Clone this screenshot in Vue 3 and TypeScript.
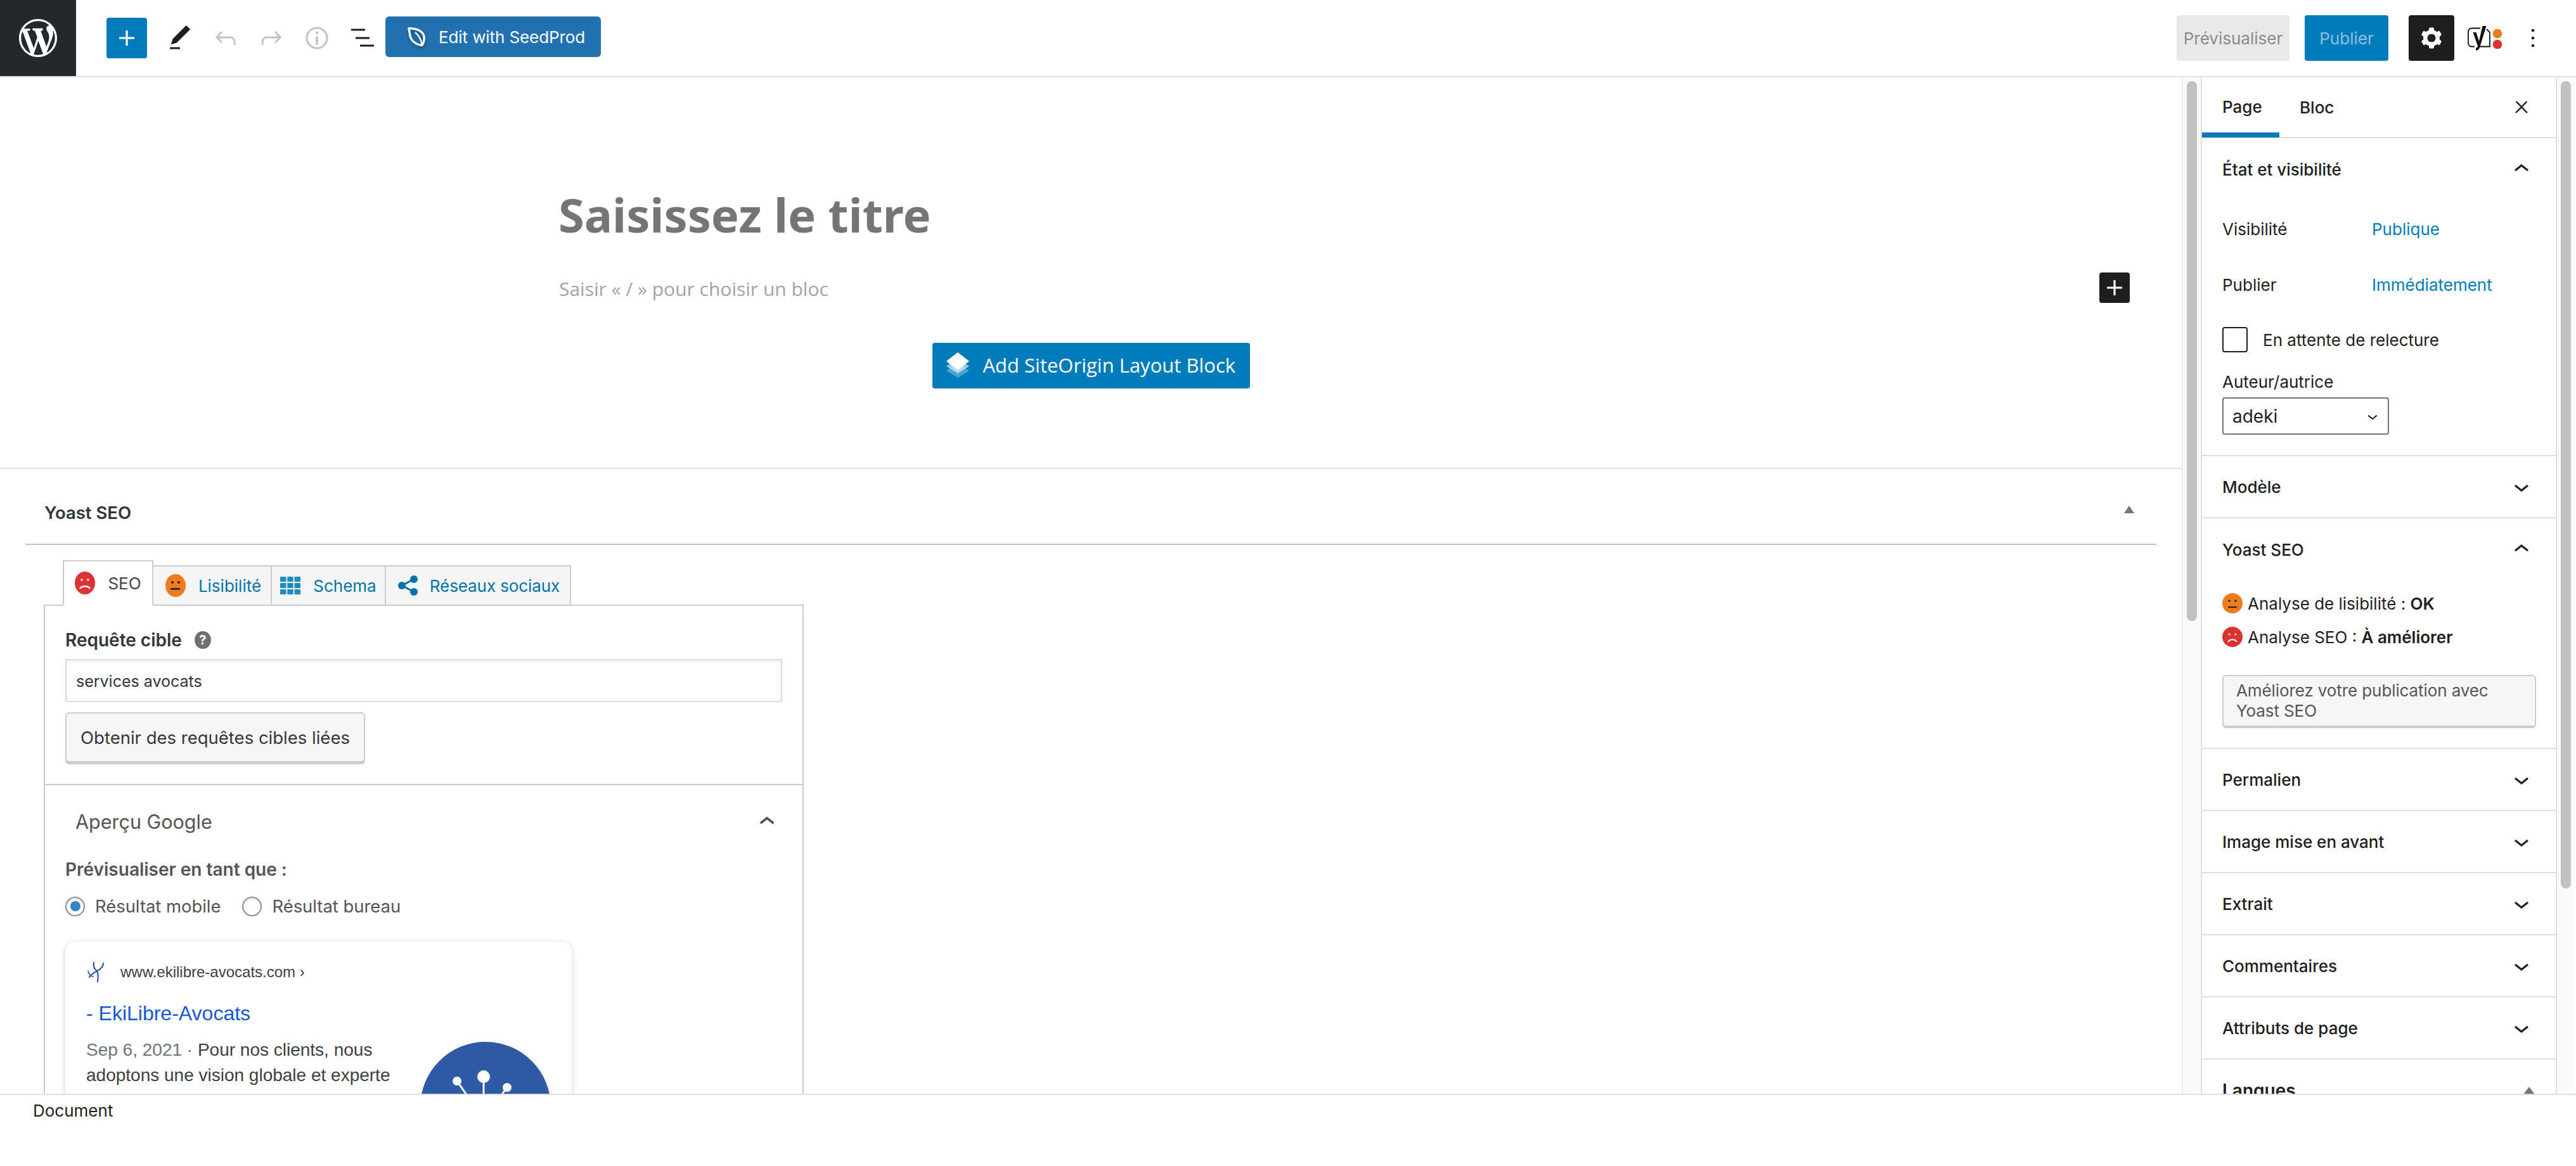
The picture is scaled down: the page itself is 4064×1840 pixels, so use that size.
<script setup lang="ts">
import { ref } from 'vue'

const chevronDown = 'M17.5 11.6L12 16l-5.5-4.4.9-1.2L12 14l4.5-3.6 1 1.2z'
const chevronUp = 'M6.5 12.4L12 8l5.5 4.4-.9 1.2L12 10l-4.5 3.6-1-1.2z'
const plus = 'M18 11.2h-5.2V6h-1.6v5.2H6v1.6h5.2V18h1.6v-5.2H18z'

const closedPanels = ref<string[]>(['Permalien', 'Image mise en avant', 'Extrait', 'Commentaires', 'Attributs de page'])
const gearTeeth = [0, 60, 120, 180, 240, 300]
</script>

<template>
  <div class="page">
    <!-- barre du haut -->
    <header class="topbar">
      <div class="wp-logo">
        <svg viewBox="0 0 20 20" width="60" height="60" fill="#fff">
          <path d="M20 10c0-5.51-4.49-10-10-10C4.48 0 0 4.49 0 10c0 5.52 4.48 10 10 10 5.51 0 10-4.48 10-10zM7.78 15.37L4.37 6.22c.55-.02 1.17-.08 1.17-.08.5-.06.44-1.13-.06-1.11 0 0-1.45.11-2.37.11-.18 0-.37 0-.58-.01C4.12 2.69 6.87 1.11 10 1.11c2.33 0 4.45.87 6.05 2.34-.68-.11-1.65.39-1.65 1.58 0 .74.45 1.36.9 2.1.35.61.55 1.36.55 2.46 0 1.49-1.4 5-1.4 5l-3.03-8.37c.54-.02.82-.17.82-.17.5-.05.44-1.25-.06-1.22 0 0-1.44.12-2.38.12-.87 0-2.33-.12-2.33-.12-.5-.03-.56 1.2-.06 1.22l.92.08 1.26 3.41zM17.41 10c.24-.64.74-1.87.43-4.25.7 1.29 1.05 2.71 1.05 4.25 0 3.29-1.73 6.24-4.4 7.78.97-2.59 1.94-5.2 2.92-7.78zM6.1 18.09C3.12 16.65 1.11 13.53 1.11 10c0-1.3.23-2.48.72-3.59C3.25 10.3 4.67 14.2 6.1 18.09zm4.03-6.63l2.58 6.98c-.86.29-1.76.45-2.71.45-.79 0-1.57-.11-2.29-.33.81-2.38 1.62-4.74 2.42-7.1z" />
        </svg>
      </div>
      <button class="add-btn">
        <svg viewBox="0 0 24 24" width="48" height="48" fill="#fff"><path :d="plus" /></svg>
      </button>
      <div class="tool-icons">
        <span class="tool">
          <svg viewBox="0 0 24 24" width="48" height="48" fill="#1e1e1e"><path d="M20.1 5.1L16.9 2 6.2 12.7l-1.3 4.4 4.5-1.3L20.1 5.1zM4 20.8h8v-1.5H4v1.5z" /></svg>
        </span>
        <span class="tool">
          <svg viewBox="0 0 24 24" width="48" height="48" fill="#c4c4c4"><path d="M18.3 11.7c-.6-.6-1.4-.9-2.3-.9H6.7l2.9-3.3-1.1-1-4.5 5L8.5 16l1-1-2.7-2.7H16c.5 0 .9.2 1.3.5 1 1 1 3.4 1 4.5v.3h1.5v-.2c0-1.5 0-4.3-1.5-5.7z" /></svg>
        </span>
        <span class="tool">
          <svg viewBox="0 0 24 24" width="48" height="48" fill="#c4c4c4"><path d="M15.6 6.5l-1.1 1 2.9 3.3H8c-.9 0-1.7.3-2.3.9-1.4 1.5-1.4 4.2-1.4 5.6v.2h1.5v-.3c0-1.1 0-3.5 1-4.5.3-.3.7-.5 1.3-.5h9.2L14.5 15l1.1 1.1 4.6-4.6-4.6-5z" /></svg>
        </span>
        <span class="tool">
          <svg viewBox="0 0 24 24" width="48" height="48" fill="#c4c4c4"><path d="M12 3.2c-4.8 0-8.8 3.9-8.8 8.8 0 4.8 3.9 8.8 8.8 8.8 4.8 0 8.8-3.9 8.8-8.8 0-4.8-4-8.8-8.8-8.8zm0 16c-4 0-7.2-3.3-7.2-7.2C4.8 8 8 4.8 12 4.8s7.2 3.3 7.2 7.2c0 4-3.2 7.2-7.2 7.2zM11 17h2v-6h-2v6zm0-8h2V7h-2v2z" /></svg>
        </span>
        <span class="tool">
          <svg viewBox="0 0 48 48" width="48" height="48" fill="#1e1e1e">
            <rect x="6" y="9.5" width="22" height="3" />
            <rect x="13" y="22.5" width="22" height="3" />
            <rect x="20" y="34.5" width="22" height="3" />
          </svg>
        </span>
      </div>
      <button class="seedprod">
        <svg class="seed-leaf" viewBox="0 0 30 32" width="30" height="32" fill="none" stroke="#fff" stroke-width="3.4" stroke-linejoin="round">
          <path d="M3 2.5c10 .5 22 3 24 13 .7 5-.6 10-3 14-9-1-17-6-19-15C4.200 10 3.500 6 3 2.500z" />
          <path d="M13 9c5 4 9 10 11 20" stroke-width="2.4" />
        </svg>
        <span>Edit with SeedProd</span>
      </button>
      <div class="spacer"></div>
      <button class="preview">Prévisualiser</button>
      <button class="publish">Publier</button>
      <button class="gear">
        <svg viewBox="0 0 24 24" width="48" height="48" fill="#fff">
          <rect v-for="a in gearTeeth" :key="a" x="10" y="3.700" width="4" height="5" rx="1" :transform="`rotate(${a} 12 12)`" />
          <path fill-rule="evenodd" d="M12 5.500a6.500 6.500 0 1 0 0 13 6.500 6.500 0 0 0 0-13zm0 3.200a3.300 3.300 0 1 1 0 6.600 3.300 3.300 0 0 1 0-6.600z" />
        </svg>
      </button>
      <svg class="yoast-logo" viewBox="0 0 56 40" width="56" height="40">
        <path d="M21 4.500H7.500A5.500 5.500 0 0 0 2 10v18a5.500 5.500 0 0 0 5.500 5.500H12M31 6l5 5v22.500H20" fill="none" stroke="#111" stroke-width="1.800" />
        <path d="M9.500 11h5l4.500 14L24.500 1h6L20 35c-1 3-3 4.500-6 4.500v-4c1.500 0 2.500-.8 3-2.500l-.4-1.500z" fill="#111" />
        <circle cx="48" cy="13" r="7.300" fill="#ee7c1b" />
        <circle cx="48" cy="30" r="7.300" fill="#dc3232" />
      </svg>
      <span class="more">
        <svg viewBox="0 0 24 24" width="48" height="48" fill="#1e1e1e"><path d="M13 19h-2v-2h2v2zm0-6h-2v-2h2v2zm0-6h-2V5h2v2z" /></svg>
      </span>
    </header>

    <div class="workspace">
      <!-- éditeur -->
      <main class="editor">
        <section class="canvas">
          <h1 class="post-title">Saisissez le titre</h1>
          <div class="para-row">
            <span class="placeholder">Saisir « / » pour choisir un bloc</span>
            <button class="inline-add">
              <svg viewBox="0 0 24 24" width="48" height="48" fill="#fff"><path :d="plus" /></svg>
            </button>
          </div>
          <div class="so-row">
            <button class="so-btn">
              <svg viewBox="0 0 40 40" width="40" height="40">
                <path d="M20 16l18 13-18 11L2 29z" fill="#fff" opacity=".3" />
                <path d="M20 9l18 13-18 11L2 22z" fill="#fff" opacity=".6" />
                <path d="M20 0l18 14-18 14L2 14z" fill="#fff" />
              </svg>
              <span>Add SiteOrigin Layout Block</span>
            </button>
          </div>
        </section>

        <section class="metabox">
          <div class="mb-head">
            <span class="mb-title">Yoast SEO</span>
            <span class="mb-toggle"></span>
          </div>
          <div class="mb-body">
            <div class="y-tabs">
              <div class="y-tab">
                <svg class="face" viewBox="0 0 32 36" width="32" height="36">
                  <ellipse cx="16" cy="18" rx="16" ry="18" fill="#dc3232" />
                  <circle cx="11" cy="13" r="2" fill="#fff" opacity=".75" /><circle cx="21" cy="13" r="2" fill="#fff" opacity=".75" />
                  <path d="M8 27c3-5 13-5 16 0" fill="none" stroke="#fff" stroke-width="2.400" />
                </svg>
                <span>SEO</span>
              </div>
              <div class="y-tab">
                <svg class="face" viewBox="0 0 32 36" width="32" height="36">
                  <ellipse cx="16" cy="18" rx="16" ry="18" fill="#ee7c1b" />
                  <circle cx="11" cy="13" r="2" fill="#222" /><circle cx="21" cy="13" r="2" fill="#222" />
                  <rect x="8" y="22" width="15" height="2.600" fill="#222" />
                </svg>
                <span>Lisibilité</span>
              </div>
              <div class="y-tab">
                <svg viewBox="0 0 32 28" width="32" height="28" fill="#1e8cbe">
                  <rect x="0" y="0" width="9.500" height="8" rx="1" /><rect x="11.200" y="0" width="9.500" height="8" rx="1" /><rect x="22.500" y="0" width="9.500" height="8" rx="1" />
                  <rect x="0" y="10" width="9.500" height="8" rx="1" /><rect x="11.200" y="10" width="9.500" height="8" rx="1" /><rect x="22.500" y="10" width="9.500" height="8" rx="1" />
                  <rect x="0" y="20" width="9.500" height="8" rx="1" /><rect x="11.200" y="20" width="9.500" height="8" rx="1" /><rect x="22.500" y="20" width="9.500" height="8" rx="1" />
                </svg>
                <span>Schema</span>
              </div>
              <div class="y-tab">
                <svg viewBox="0 0 32 32" width="32" height="32" fill="#0073aa">
                  <circle cx="25" cy="6" r="6" /><circle cx="6" cy="16" r="6" /><circle cx="25" cy="26" r="6" />
                  <path d="M25 6L6 16l19 10" fill="none" stroke="#0073aa" stroke-width="3" />
                </svg>
                <span>Réseaux sociaux</span>
              </div>
            </div>
            <div class="y-box">
              <div class="y-sec first">
                <div class="kw-label">
                  <span>Requête cible</span>
                  <span class="help">?</span>
                </div>
                <div class="kw-input">services avocats</div>
                <button class="kw-btn">Obtenir des requêtes cibles liées</button>
              </div>
              <div class="y-sec">
                <div class="gp-head">
                  <span>Aperçu Google</span>
                  <svg viewBox="0 0 24 24" width="48" height="48" fill="#555"><path :d="chevronUp" stroke="#555" stroke-width=".4" /></svg>
                </div>
                <div class="gp-label">Prévisualiser en tant que :</div>
                <div class="radios">
                  <span class="radio on"></span><span class="r-text">Résultat mobile</span>
                  <span class="radio"></span><span class="r-text">Résultat bureau</span>
                </div>
                <div class="serp">
                  <div class="serp-url">
                    <svg viewBox="0 0 30 32" width="30" height="32" fill="none" stroke="#2d5ba5" stroke-width="2.200" stroke-linecap="round">
                      <path d="M12 1c-1 6 1 10 4 12 3 4 3 12 2 18" />
                      <path d="M27 2c0 6-5 10-11 13-4 2-8 4-11 9" />
                      <path d="M3 14c1 5 2 8 8 9" stroke-width="1.600" />
                    </svg>
                    <span>www.ekilibre-avocats.com ›</span>
                  </div>
                  <div class="serp-title">- EkiLibre-Avocats</div>
                  <div class="serp-main">
                    <div class="serp-text">
                      <span class="date">Sep 6, 2021 ·</span> Pour nos clients, nous<br />
                      adoptons une vision globale et experte<br />
                      à vos côtés tout au long de
                    </div>
                    <svg class="serp-img" viewBox="0 0 206 206" width="206" height="206">
                      <circle cx="103" cy="103" r="103" fill="#2d5ba5" />
                      <path d="M100 55v70M58 62l42 60M137 72l-37 50" stroke="#fff" stroke-width="3" />
                      <circle cx="100" cy="55" r="10" fill="#fff" />
                      <circle cx="58" cy="62" r="7" fill="#fff" />
                      <circle cx="137" cy="72" r="7" fill="#fff" />
                    </svg>
                  </div>
                </div>
              </div>
            </div>
          </div>
        </section>
      </main>
      <div class="track editor-track"><div class="thumb editor-thumb"></div></div>

      <!-- colonne latérale -->
      <aside class="sidebar">
        <div class="side-tabs">
          <span class="side-tab on">Page</span>
          <span class="side-tab">Bloc</span>
          <svg class="side-close" viewBox="0 0 24 24" width="30" height="30" fill="#1e1e1e"><path d="M13 11.800l6.100-6.300-1-1-6.100 6.200-6.100-6.200-1 1 6.100 6.300-6.500 6.700 1 1 6.500-6.600 6.500 6.600 1-1z" stroke="#1e1e1e" stroke-width=".6" /></svg>
        </div>

        <div class="panel">
          <div class="panel-head tall">
            <span>État et visibilité</span>
            <svg viewBox="0 0 24 24" width="48" height="48" fill="#1e1e1e"><path :d="chevronUp" /></svg>
          </div>
          <div class="status-body">
            <div class="status-row"><span class="s-label">Visibilité</span><span class="s-link">Publique</span></div>
            <div class="status-row second"><span class="s-label">Publier</span><span class="s-link">Immédiatement</span></div>
            <div class="check-row"><span class="check"></span><span>En attente de relecture</span></div>
            <div class="author-label">Auteur/autrice</div>
            <div class="author-select">
              <span>adeki</span>
              <svg viewBox="0 0 24 24" width="32" height="32" fill="#1e1e1e"><path :d="chevronDown" /></svg>
            </div>
          </div>
        </div>

        <div class="panel">
          <div class="panel-head">
            <span>Modèle</span>
            <svg viewBox="0 0 24 24" width="48" height="48" fill="#1e1e1e"><path :d="chevronDown" /></svg>
          </div>
        </div>

        <div class="panel">
          <div class="panel-head tall">
            <span>Yoast SEO</span>
            <svg viewBox="0 0 24 24" width="48" height="48" fill="#1e1e1e"><path :d="chevronUp" /></svg>
          </div>
          <div class="yoast-body">
            <div class="score">
              <svg viewBox="0 0 32 32" width="32" height="32">
                <circle cx="16" cy="16" r="16" fill="#ee7c1b" />
                <circle cx="11" cy="12" r="1.800" fill="#222" /><circle cx="21" cy="12" r="1.800" fill="#222" />
                <rect x="9" y="21" width="14" height="2.200" fill="#222" />
              </svg>
              <span>Analyse de lisibilité : <b>OK</b></span>
            </div>
            <div class="score">
              <svg viewBox="0 0 32 32" width="32" height="32">
                <circle cx="16" cy="16" r="16" fill="#dc3232" />
                <circle cx="11" cy="12" r="1.800" fill="#fff" opacity=".75" /><circle cx="21" cy="12" r="1.800" fill="#fff" opacity=".75" />
                <path d="M9 24c3-5 11-5 14 0" fill="none" stroke="#fff" stroke-width="2.200" />
              </svg>
              <span>Analyse SEO : <b>À améliorer</b></span>
            </div>
            <button class="improve">Améliorez votre publication avec Yoast SEO</button>
          </div>
        </div>

        <div v-for="p in closedPanels" :key="p" class="panel">
          <div class="panel-head">
            <span>{{ p }}</span>
            <svg viewBox="0 0 24 24" width="48" height="48" fill="#1e1e1e"><path :d="chevronDown" /></svg>
          </div>
        </div>

        <div class="panel-head tall langues">
          <span>Langues</span>
          <span class="lang-toggle"></span>
        </div>
      </aside>
      <div class="track side-track"><div class="thumb side-thumb"></div></div>
    </div>

    <footer class="foot">Document</footer>
  </div>
</template>

<style scoped>
.page {
  width: 4064px;
  height: 1840px;
  display: flex;
  flex-direction: column;
  overflow: hidden;
  background: #fff;
  color: #1e1e1e;
  font-family: Inter, "Liberation Sans", sans-serif;
  font-size: 26px;
}
button {
  font: inherit;
  border: 0;
  padding: 0;
  cursor: pointer;
}
svg {
  display: block;
  flex: none;
}

/* topbar */
.topbar {
  height: 122px;
  flex: none;
  display: flex;
  align-items: center;
  border-bottom: 2px solid #e0e0e0;
  padding-right: 44px;
}
.wp-logo {
  width: 120px;
  height: 120px;
  background: #23282d;
  display: flex;
  align-items: center;
  justify-content: center;
}
.add-btn {
  width: 64px;
  height: 64px;
  margin-left: 48px;
  border-radius: 4px;
  background: #007cba;
  display: flex;
  align-items: center;
  justify-content: center;
}
.tool-icons {
  display: flex;
  margin-left: 16px;
}
.tool {
  width: 72px;
  height: 48px;
  padding-left: 12px;
}
.seedprod {
  width: 340px;
  height: 64px;
  margin-top: -4px;
  border-radius: 6px;
  background: #2271b1;
  color: #fff;
  display: flex;
  align-items: center;
  padding-left: 34px;
  gap: 20px;
  letter-spacing: -0.1px;
}
.seed-leaf {
  filter: drop-shadow(1px 3px 3px rgba(0, 0, 0, 0.35));
}
.spacer {
  flex: 1;
}
.preview,
.publish {
  height: 72px;
  border-radius: 4px;
  text-align: center;
}
.preview {
  width: 178px;
  background: #e9e9e9;
  color: #8b8b8b;
}
.publish {
  width: 132px;
  margin-left: 24px;
  background: #007cba;
  color: #8cc0de;
}
.gear {
  width: 72px;
  height: 72px;
  margin-left: 32px;
  border-radius: 4px;
  background: #1e1e1e;
  display: flex;
  align-items: center;
  justify-content: center;
}
.yoast-logo {
  margin-left: 20px;
}
.more {
  margin-left: 24px;
}

.workspace {
  flex: 1;
  min-height: 0;
  display: flex;
}

/* editor */
.editor {
  width: 3442px;
  flex: none;
  overflow: hidden;
}
.canvas {
  height: 618px;
  border-bottom: 2px solid #e0e0e0;
  padding-top: 171px;
  box-sizing: border-box;
  font-family: "Noto Sans", "Open Sans", sans-serif;
}
.post-title {
  width: 1680px;
  margin: 0 auto;
  font-size: 74px;
  line-height: 91px;
  font-weight: 700;
  color: #757575;
}
.para-row {
  margin-top: 46px;
  padding: 0 82px 0 882px;
  height: 48px;
  display: flex;
  align-items: center;
  justify-content: space-between;
}
.placeholder {
  font-family: "Open Sans", "Noto Sans", sans-serif;
  font-size: 30px;
  padding-top: 2px;
  color: #a3a3a3;
}
.inline-add {
  width: 48px;
  height: 48px;
  border-radius: 4px;
  background: #1e1e1e;
}
.so-row {
  margin-top: 63px;
  display: flex;
  justify-content: center;
}
.so-btn {
  width: 501px;
  height: 72px;
  border-radius: 4px;
  background: #007cba;
  color: #fff;
  font-family: "Open Sans", "Noto Sans", sans-serif;
  font-size: 31px;
  display: flex;
  align-items: center;
  padding-left: 20px;
  padding-bottom: 2px;
  gap: 20px;
  white-space: nowrap;
}

/* yoast metabox */
.metabox {
  margin: 0 40px;
  color: #32373c;
}
.mb-head {
  height: 120px;
  border-bottom: 2px solid #c3c4c7;
  display: flex;
  align-items: center;
  justify-content: space-between;
  padding: 20px 32px 0 30px;
}
.mb-title {
  font-weight: 600;
  font-size: 27.5px;
}
.mb-toggle {
  width: 0;
  height: 0;
  border-left: 8px solid transparent;
  border-right: 8px solid transparent;
  border-bottom: 12px solid #72777c;
  margin-right: 3px;
  margin-top: -10px;
}
.mb-body {
  padding: 24px 0 0 29px;
}
.y-tabs {
  display: flex;
  align-items: flex-end;
  height: 72px;
  padding-left: 30px;
  position: relative;
  z-index: 1;
  margin-bottom: -2px;
}
.y-tab {
  height: 64px;
  border: 2px solid #ccc;
  border-left-width: 0;
  background: #f5f5f5;
  color: #0073aa;
  display: flex;
  align-items: center;
  justify-content: center;
  gap: 20px;
  white-space: nowrap;
}
.y-tab:nth-child(1) {
  width: 143px;
  height: 72px;
  border-left-width: 2px;
  border-bottom-color: #fff;
  background: #fff;
  color: #444;
}
.y-tab:nth-child(2) {
  width: 187px;
  padding-left: 4px;
}
.y-tab:nth-child(3) {
  width: 180px;
}
.y-tab:nth-child(4) {
  width: 292px;
  padding-left: 3px;
  gap: 18px;
  letter-spacing: -0.1px;
}
.y-box {
  width: 1199px;
  border: 2px solid #ccc;
}
.y-sec {
  padding: 0 32px;
}
.y-sec.first {
  padding-top: 36px;
  padding-bottom: 34px;
  border-bottom: 2px solid #ccc;
}
.kw-label {
  height: 36px;
  display: flex;
  align-items: center;
  gap: 20px;
  font-weight: 600;
  font-size: 28px;
}
.help {
  width: 26px;
  height: 28px;
  border-radius: 50%;
  background: #707070;
  color: #fff;
  font-size: 20px;
  line-height: 28px;
  text-align: center;
  font-weight: 700;
}
.kw-input {
  height: 68px;
  margin-top: 12px;
  border: 2px solid #ddd;
  box-shadow: inset 0 2px 4px rgba(0, 0, 0, 0.07);
  padding: 0 15px;
  font-size: 25px;
  line-height: 66px;
  color: #32373c;
}
.kw-btn {
  display: block;
  width: 473px;
  height: 79px;
  margin-top: 16px;
  border: 2px solid #ccc;
  border-bottom-width: 2px;
  box-shadow: 0 3px 0 #ccc;
  border-radius: 6px;
  background: #f7f7f7;
  color: #32373c;
  font-size: 27.5px;
  white-space: nowrap;
}
.gp-head {
  height: 115px;
  padding: 0 0 0 16px;
  display: flex;
  align-items: center;
  justify-content: space-between;
  font-size: 30.5px;
  color: #555;
}
.gp-label {
  height: 36px;
  line-height: 36px;
  font-weight: 600;
  font-size: 28px;
  color: #555;
}
.radios {
  height: 40px;
  margin-top: 20px;
  display: flex;
  align-items: center;
  font-size: 27.4px;
  color: #555;
}
.radio {
  width: 31px;
  height: 31px;
  border-radius: 50%;
  border: 2px solid #8c8f94;
  background: #fff;
  display: flex;
  align-items: center;
  justify-content: center;
  box-shadow: inset 0 2px 3px rgba(0, 0, 0, 0.1);
}
.radio.on::before {
  content: "";
  width: 16px;
  height: 16px;
  border-radius: 50%;
  background: #3582c4;
}
.r-text {
  margin-left: 16px;
  margin-right: 34px;
}
.serp {
  width: 799px;
  height: 420px;
  margin-top: 36px;
  border-radius: 16px;
  box-shadow: 0 2px 8px rgba(60, 64, 67, 0.25);
  padding: 32px 33px;
  font-family: "Liberation Sans", Arial, sans-serif;
}
.serp-url {
  height: 32px;
  display: flex;
  align-items: center;
  gap: 24px;
  font-size: 24px;
  color: #3c4043;
}
.serp-title {
  margin-top: 29px;
  height: 40px;
  line-height: 40px;
  font-size: 32px;
  color: #1558d6;
}
.serp-main {
  margin-top: 18px;
  display: flex;
  justify-content: space-between;
}
.serp-text {
  font-size: 28px;
  line-height: 40px;
  color: #3c4043;
  white-space: nowrap;
}
.date {
  color: #70757a;
}
.serp-img {
  margin-top: 7px;
}

/* scrollbars */
.track {
  flex: none;
  background: #fafafa;
  padding-top: 6px;
}
.editor-track {
  width: 32px;
  border-left: 2px solid #ececec;
  border-right: 2px solid #e0e0e0;
  padding-left: 6px;
}
.side-track {
  width: 30px;
  border-left: 2px solid #e0e0e0;
  padding-left: 6px;
}
.thumb {
  width: 16px;
  border-radius: 8px;
  background: #c1c1c1;
}
.editor-thumb {
  height: 852px;
}
.side-thumb {
  height: 1274px;
}

/* sidebar */
.sidebar {
  width: 558px;
  flex: none;
  overflow: hidden;
}
.side-tabs {
  height: 96px;
  display: flex;
  align-items: center;
  border-bottom: 2px solid #e0e0e0;
  position: relative;
}
.side-tab {
  height: 96px;
  line-height: 98px;
  padding-left: 32px;
  font-weight: 500;
}
.side-tab.on {
  width: 122px;
  border-bottom: 8px solid #007cba;
  line-height: 96px;
}
.side-close {
  margin-left: auto;
  margin-right: 39px;
}
.panel {
  border-bottom: 2px solid #e0e0e0;
}
.panel-head {
  height: 96px;
  display: flex;
  align-items: center;
  justify-content: space-between;
  padding: 0 30px 0 32px;
  font-weight: 500;
}
.panel-head.tall {
  height: 98px;
}
.status-body {
  padding: 25px 32px 32px;
}
.status-row {
  height: 40px;
  display: flex;
  align-items: center;
}
.status-row.second {
  margin-top: 48px;
}
.s-label {
  width: 236px;
}
.s-link {
  color: #007cba;
}
.check-row {
  height: 40px;
  margin-top: 47px;
  display: flex;
  align-items: center;
  gap: 24px;
}
.check {
  width: 40px;
  height: 40px;
  border: 2px solid #1e1e1e;
  border-radius: 4px;
}
.author-label {
  height: 36px;
  line-height: 36px;
  margin-top: 29px;
}
.author-select {
  width: 263px;
  height: 59px;
  margin-top: 6px;
  border: 2px solid #757575;
  border-radius: 4px;
  padding: 0 8px 0 14px;
  font-size: 28px;
  display: flex;
  align-items: center;
  justify-content: space-between;
}
.yoast-body {
  padding: 20px 32px 31px;
}
.score {
  height: 32px;
  display: flex;
  align-items: center;
  gap: 8px;
  margin-bottom: 21px;
}
.score b {
  font-weight: 600;
}
.improve {
  display: block;
  width: 495px;
  height: 84px;
  margin-top: 44px;
  border: 2px solid #ccc;
  border-bottom-width: 4px;
  border-radius: 6px;
  background: #f7f7f7;
  color: #555;
  text-align: left;
  padding: 0 20px;
  line-height: 32px;
  letter-spacing: -0.1px;
}
.langues span:first-child {
  font-size: 28px;
  font-weight: 600;
}
.lang-toggle {
  width: 0;
  height: 0;
  border-left: 9px solid transparent;
  border-right: 9px solid transparent;
  border-bottom: 12px solid #72777c;
  margin-right: 3px;
}

/* footer */
.foot {
  height: 114px;
  flex: none;
  position: relative;
  background: #fff;
  border-top: 2px solid #e0e0e0;
  padding: 9px 0 0 52px;
  line-height: 32px;
}
</style>

<style>
html,
body {
  margin: 0;
  background: #fff;
}
* {
  box-sizing: border-box;
}
</style>
